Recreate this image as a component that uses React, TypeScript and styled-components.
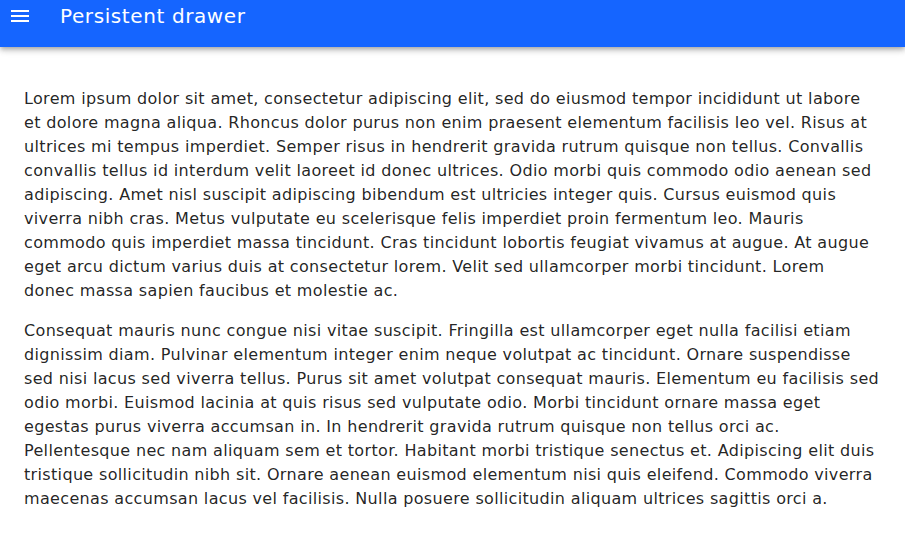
import React from "react";
import styled, { createGlobalStyle } from "styled-components";

const Global = createGlobalStyle`
  html, body { margin: 0; padding: 0; background: #fff; }
  body { font-family: "DejaVu Sans", "Noto Sans", sans-serif; color: rgba(0,0,0,0.87); }
`;

const Page = styled.div`
  display: flex;
  flex-direction: column;
  min-height: 552px;
`;

const AppBar = styled.header`
  height: 47px;
  background: #1565ff;
  color: #fff;
  display: flex;
  align-items: flex-start;
  box-shadow: 0 2px 4px -1px rgba(0,0,0,0.2), 0 4px 5px 0 rgba(0,0,0,0.14), 0 1px 10px 0 rgba(0,0,0,0.12);
  position: relative;
  z-index: 1;
`;

const MenuButton = styled.button`
  width: 40px;
  height: 32px;
  padding: 0;
  border: 0;
  background: transparent;
  color: #fff;
  display: flex;
  align-items: center;
  justify-content: center;
`;

const Title = styled.h1`
  margin: 0 0 0 20px;
  font-size: 20px;
  font-weight: 400;
  line-height: 32px;
  letter-spacing: 0.6px;
`;

const Main = styled.main`
  padding: 40px 24px 24px;
`;

const Para = styled.p`
  margin: 0 0 16px;
  font-size: 16px;
  line-height: 24px;
  letter-spacing: 0.34px;
`;

const Line = styled.span`
  display: block;
  white-space: nowrap;
`;

const p1 = [
  "Lorem ipsum dolor sit amet, consectetur adipiscing elit, sed do eiusmod tempor incididunt ut labore",
  "et dolore magna aliqua. Rhoncus dolor purus non enim praesent elementum facilisis leo vel. Risus at",
  "ultrices mi tempus imperdiet. Semper risus in hendrerit gravida rutrum quisque non tellus. Convallis",
  "convallis tellus id interdum velit laoreet id donec ultrices. Odio morbi quis commodo odio aenean sed",
  "adipiscing. Amet nisl suscipit adipiscing bibendum est ultricies integer quis. Cursus euismod quis",
  "viverra nibh cras. Metus vulputate eu scelerisque felis imperdiet proin fermentum leo. Mauris",
  "commodo quis imperdiet massa tincidunt. Cras tincidunt lobortis feugiat vivamus at augue. At augue",
  "eget arcu dictum varius duis at consectetur lorem. Velit sed ullamcorper morbi tincidunt. Lorem",
  "donec massa sapien faucibus et molestie ac.",
];

const p2 = [
  "Consequat mauris nunc congue nisi vitae suscipit. Fringilla est ullamcorper eget nulla facilisi etiam",
  "dignissim diam. Pulvinar elementum integer enim neque volutpat ac tincidunt. Ornare suspendisse",
  "sed nisi lacus sed viverra tellus. Purus sit amet volutpat consequat mauris. Elementum eu facilisis sed",
  "odio morbi. Euismod lacinia at quis risus sed vulputate odio. Morbi tincidunt ornare massa eget",
  "egestas purus viverra accumsan in. In hendrerit gravida rutrum quisque non tellus orci ac.",
  "Pellentesque nec nam aliquam sem et tortor. Habitant morbi tristique senectus et. Adipiscing elit duis",
  "tristique sollicitudin nibh sit. Ornare aenean euismod elementum nisi quis eleifend. Commodo viverra",
  "maecenas accumsan lacus vel facilisis. Nulla posuere sollicitudin aliquam ultrices sagittis orci a.",
];

export default function App() {
  return (
    <Page>
      <Global />
      <AppBar>
        <MenuButton aria-label="open drawer">
          <svg width="18" height="14" viewBox="0 0 18 14">
            <rect x="0" y="1" width="18" height="2" fill="#fff" />
            <rect x="0" y="6" width="18" height="2" fill="#fff" />
            <rect x="0" y="11" width="18" height="2" fill="#fff" />
          </svg>
        </MenuButton>
        <Title>Persistent drawer</Title>
      </AppBar>
      <Main>
        <Para>
          {p1.map((l, i) => (
            <Line key={i}>{l}</Line>
          ))}
        </Para>
        <Para>
          {p2.map((l, i) => (
            <Line key={i}>{l}</Line>
          ))}
        </Para>
      </Main>
    </Page>
  );
}
